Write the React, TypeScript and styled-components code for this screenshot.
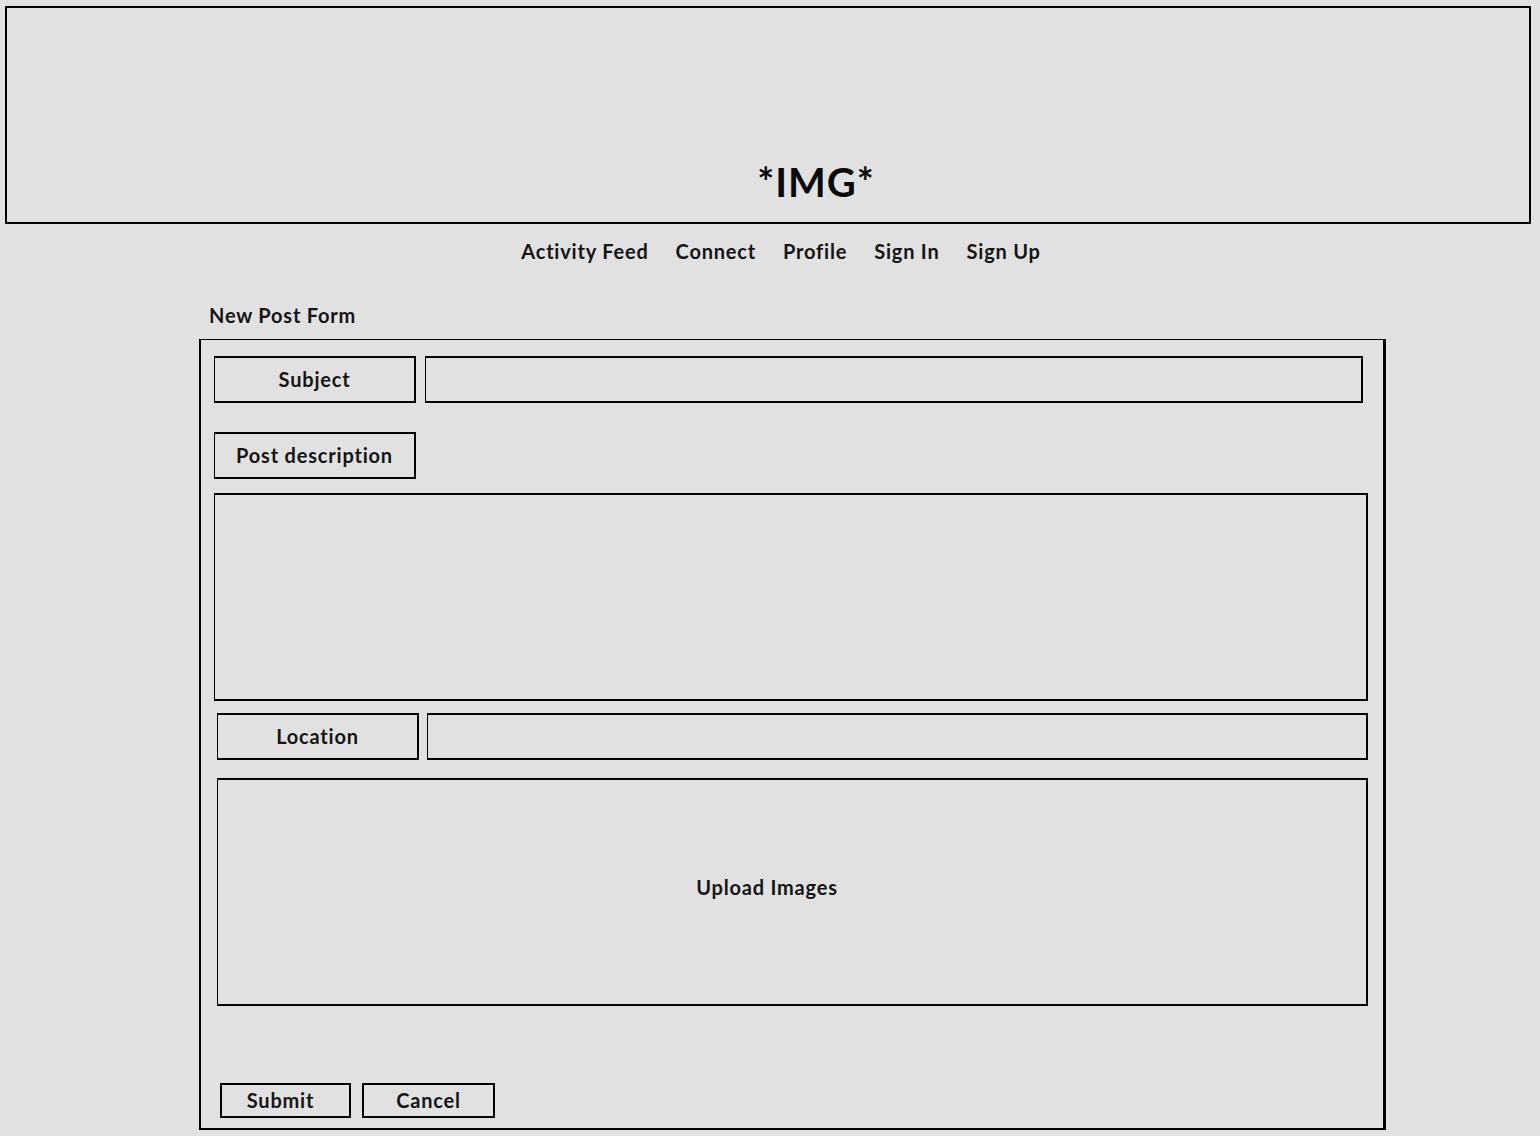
import React from "react";
import styled, { createGlobalStyle } from "styled-components";

const Global = createGlobalStyle`
  html, body { margin: 0; padding: 0; background: #e1e1e1; }
  body { font-family: "Lato", "Open Sans", sans-serif; color: #111; }
  * { box-sizing: border-box; }
`;

const Page = styled.div`
  width: 1540px;
  min-height: 1136px;
  padding: 6px 9px 0 5px;
  display: flex;
  flex-direction: column;
`;

const Banner = styled.div`
  height: 218px;
  border: 2px solid #000;
  display: flex;
  align-items: flex-end;
  justify-content: center;
  padding: 0 0 20px 96px;
`;

const BannerText = styled.span`
  font-size: 40px;
  font-weight: 700;
  letter-spacing: 1px;
  line-height: 1;
  color: #0a0a0a;
`;

const Nav = styled.nav`
  display: flex;
  justify-content: center;
  gap: 27px;
  padding: 15px 0 0 26px;
  height: 56px;
`;

const NavItem = styled.a`
  font-size: 20px;
  font-weight: 700;
  letter-spacing: 0.8px;
  line-height: 24px;
  color: #151515;
  text-decoration: none;
`;

const Title = styled.h2`
  margin: 23px 0 0 204px;
  font-size: 20px;
  font-weight: 700;
  letter-spacing: 0.8px;
  line-height: 24px;
  color: #151515;
`;

const Form = styled.form`
  margin: 12px 0 0 194px;
  width: 1187px;
  height: 791px;
  border: 2px solid #000;
  border-top-width: 1px;
  border-right-width: 3px;
  display: flex;
  flex-direction: column;
  padding: 16px 0 0 13px;
`;

const Row = styled.div<{ $top: number; $indent?: number; $gap: number }>`
  display: flex;
  gap: ${(p) => p.$gap}px;
  margin-top: ${(p) => p.$top}px;
  margin-left: ${(p) => p.$indent ?? 0}px;
`;

const Label = styled.div<{ $w?: number; $h?: number }>`
  width: ${(p) => p.$w ?? 202}px;
  height: ${(p) => p.$h ?? 47}px;
  border: 2px solid #000;
  border-left-width: 1px;
  display: flex;
  align-items: center;
  justify-content: center;
  padding-bottom: 2px;
  font-size: 20px;
  font-weight: 700;
  letter-spacing: 0.8px;
  color: #151515;
`;

const Field = styled.div<{ $w: number; $h: number }>`
  width: ${(p) => p.$w}px;
  height: ${(p) => p.$h}px;
  border: 2px solid #000;
  border-left-width: 1px;
`;

const Upload = styled.div`
  width: 1151px;
  height: 228px;
  border: 2px solid #000;
  border-left-width: 1px;
  display: flex;
  align-items: center;
  justify-content: center;
  font-size: 20px;
  font-weight: 700;
  letter-spacing: 0.8px;
  color: #151515;
  padding: 0 50px 10px 0;
`;

const Button = styled.button<{ $w: number; $shift?: number }>`
  width: ${(p) => p.$w}px;
  height: 35px;
  border: 2px solid #000;
  background: transparent;
  font-family: inherit;
  font-size: 20px;
  font-weight: 700;
  letter-spacing: 0.8px;
  color: #151515;
  padding: 0 ${(p) => p.$shift ?? 0}px 2px 0;
`;

export default function App() {
  return (
    <>
      <Global />
      <Page>
        <Banner>
          <BannerText>*IMG*</BannerText>
        </Banner>
        <Nav>
          <NavItem>Activity Feed</NavItem>
          <NavItem>Connect</NavItem>
          <NavItem>Profile</NavItem>
          <NavItem>Sign In</NavItem>
          <NavItem>Sign Up</NavItem>
        </Nav>
        <Title>New Post Form</Title>
        <Form onSubmit={(e) => e.preventDefault()}>
          <Row $top={0} $gap={9}>
            <Label>Subject</Label>
            <Field $w={938} $h={47} />
          </Row>
          <Row $top={29} $gap={0}>
            <Label>Post description</Label>
          </Row>
          <Row $top={14} $gap={0}>
            <Field $w={1154} $h={208} />
          </Row>
          <Row $top={12} $indent={3} $gap={8}>
            <Label>Location</Label>
            <Field $w={941} $h={47} />
          </Row>
          <Row $top={18} $indent={3} $gap={0}>
            <Upload>Upload Images</Upload>
          </Row>
          <Row $top={77} $indent={6} $gap={11}>
            <Button $w={131} $shift={10} type="button">Submit</Button>
            <Button $w={133} type="button">Cancel</Button>
          </Row>
        </Form>
      </Page>
    </>
  );
}
